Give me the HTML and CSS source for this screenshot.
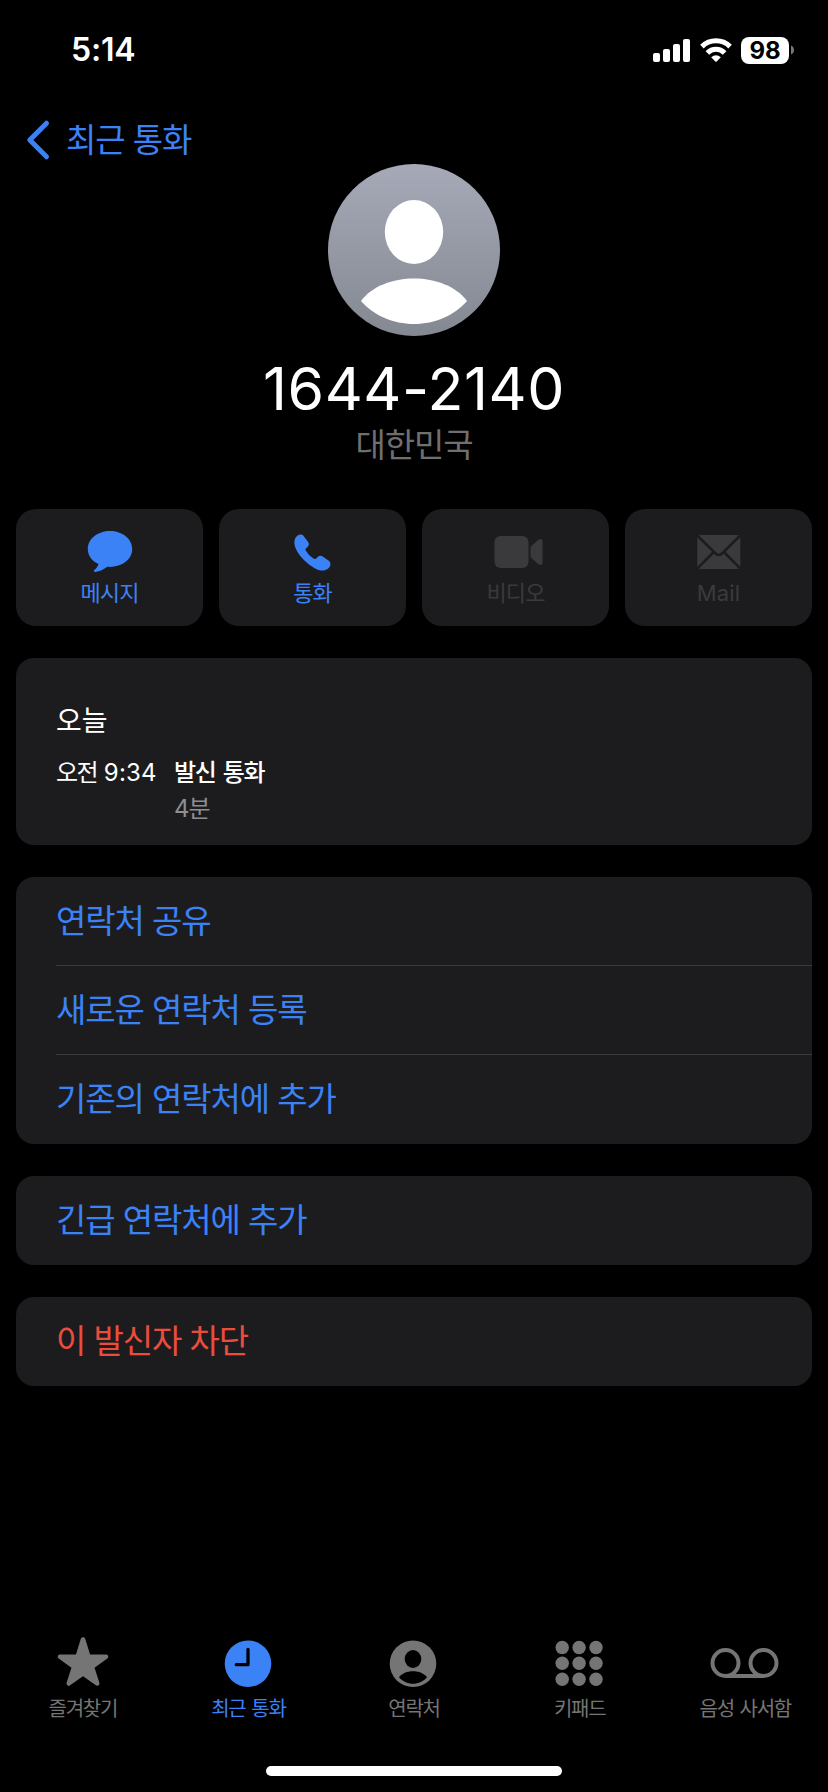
FILE: index.html
```html
<!DOCTYPE html>
<html lang="ko">
<head>
<meta charset="utf-8">
<title>최근 통화</title>
<link rel="stylesheet" href="styles.css">
</head>
<body>
<div class="screen">
  <header class="status">
    <span class="time">5:14</span>
    <div class="indicators">
      <svg class="signal" width="37" height="23" viewBox="0 0 37 23" fill="#fff"><rect y="14" width="7" height="9" rx="2"/><rect x="10" y="10" width="7" height="13" rx="2"/><rect x="20" y="5" width="7" height="18" rx="2"/><rect x="30" width="7" height="23" rx="2"/></svg>
      <svg class="wifi" width="32" height="24" viewBox="0 0 32 24"><g fill="none" stroke="#fff" stroke-width="5"><path d="M1.9 8.6A20.2 20.2 0 0 1 30.1 8.6"/><path d="M7.4 15A12 12 0 0 1 24.6 15"/></g><path fill="#fff" d="M11.2 19.2Q16 15.2 20.8 19.2L16.7 23.4Q16 24 15.3 23.4Z"/></svg>
      <div class="battery">98</div>
      <svg class="nub" width="4" height="10" viewBox="0 0 4 10"><path d="M0 0.500Q3 1.800 3 5T0 9.500Z" fill="#777"/></svg>
    </div>
  </header>
  <nav class="nav">
    <svg width="24" height="40" viewBox="0 0 24 40"><path d="M20.5 3.2L3.8 20l16.7 16.8" fill="none" stroke="#3b82f7" stroke-width="5" stroke-linecap="round" stroke-linejoin="round"/></svg>
    <a class="back">최근 통화</a>
  </nav>
  <section class="profile">
    <svg width="172" height="172" viewBox="0 0 172 172">
      <defs><linearGradient id="avatar" x1="0" y1="0" x2="0" y2="1"><stop offset="0" stop-color="#a6aab8"/><stop offset="1" stop-color="#848891"/></linearGradient></defs>
      <circle cx="86" cy="86" r="86" fill="url(#avatar)"/>
      <ellipse cx="86" cy="68" rx="29.2" ry="32" fill="#fff"/>
      <path fill="#fff" d="M33 137C44 122 65 114.5 86 114.5S128 122 139 137C127 151 107 160 86 160S45 151 33 137Z"/>
    </svg>
    <h1 class="number">1644-2140</h1>
    <p class="country">대한민국</p>
  </section>
  <section class="actions">
    <div class="action">
      <svg width="46" height="44" viewBox="0 0 46 44"><path fill="currentColor" d="M23 2C10.700 2 .8 9.900 .8 20C.8 26.700 5 32.200 11.500 35C10.800 37.700 9 39.600 7.200 41.300C6.300 42.300 7 43 8.300 43C12.500 42.700 17 40.200 20.300 37.800C34 38.800 45.200 31 45.200 20C45.200 9.900 35.300 2 23 2Z"/></svg>
      <span>메시지</span>
    </div>
    <div class="action">
      <svg width="46" height="44" viewBox="0 0 46 44"><path fill="currentColor" d="M6.500 7.600C8.500 5.300 11.800 4.800 13.600 7L18.100 13C19.400 14.900 19 16.500 17.500 18L15.900 19.600C15.300 20.300 15.400 21 15.900 21.800C17.900 25 20.500 27.700 24 29.700C24.800 30.200 25.500 30.100 26.100 29.500L28 27.800C29.300 26.500 30.900 26.300 32.700 27.400L38.800 31.700C41.100 33.500 40.900 36.500 39 38.700C35.400 42.500 30 42.200 24.700 39.200C17.700 35.400 9.900 28 6.300 20.800C3.900 15.900 3.500 11.100 6.500 7.600Z"/></svg>
      <span>통화</span>
    </div>
    <div class="action off">
      <svg width="50" height="44" viewBox="0 0 50 44" fill="currentColor"><rect x="3.500" y="7" width="34" height="32" rx="6"/><path d="M39.500 17.700L47.300 10.800Q51.500 8.500 51.500 13V33Q51.500 37.500 47.300 35.200L39.500 28.300Z"/></svg>
      <span>비디오</span>
    </div>
    <div class="action off">
      <svg width="46" height="44" viewBox="0 0 46 44"><rect x="1.300" y="6" width="43" height="34" rx="3" fill="currentColor"/><path d="M0 5.200L18.700 23.600Q22.800 28.500 26.900 23.600L45.600 5.200M0 40.800L17.200 23.500M45.600 40.800L28.400 23.500" fill="none" stroke="#1c1c1e" stroke-width="2.600"/></svg>
      <span class="latin">Mail</span>
    </div>
  </section>
  <section class="card log">
    <h2 class="day">오늘</h2>
    <div class="calls">
      <div class="when">오전 <span class="digits">9:34</span></div>
      <div class="what"><div class="kind">발신 통화</div><div class="length">4분</div></div>
    </div>
  </section>
  <section class="card list group">
    <a class="row">연락처 공유</a>
    <a class="row">새로운 연락처 등록</a>
    <a class="row">기존의 연락처에 추가</a>
  </section>
  <section class="card list"><a class="row">긴급 연락처에 추가</a></section>
  <section class="card list"><a class="row danger">이 발신자 차단</a></section>
  <footer class="tabs">
    <div class="tab">
      <svg width="54" height="54" viewBox="0 0 54 54"><path d="M27 4.500L32.300 21.700H50L35.800 31.800L41.200 48.500L27 38.300L12.800 48.500L18.200 31.800L4 21.700H21.700Z" fill="currentColor" stroke="currentColor" stroke-width="4.600" stroke-linejoin="round"/></svg>
      <span>즐겨찾기</span>
    </div>
    <div class="tab on">
      <svg width="54" height="54" viewBox="0 0 54 54"><circle cx="27" cy="28.700" r="23.300" fill="currentColor"/><path d="M27 14.500V29.700H15.300" fill="none" stroke="#000" stroke-width="3.300" stroke-linecap="round" stroke-linejoin="round"/></svg>
      <span>최근 통화</span>
    </div>
    <div class="tab">
      <svg width="54" height="54" viewBox="0 0 54 54"><circle cx="26" cy="28.700" r="23.300" fill="currentColor"/><ellipse cx="26" cy="24" rx="8.300" ry="9" fill="#000"/><path d="M12 42.200C15 38.300 20 36.200 26 36.200S37 38.300 40 42.200C36.500 46.200 31.500 48.700 26 48.700S15.500 46.200 12 42.200Z" fill="#000"/></svg>
      <span>연락처</span>
    </div>
    <div class="tab">
      <svg width="54" height="54" viewBox="0 0 54 54" fill="currentColor"><circle cx="9.200" cy="12.500" r="6.700"/><circle cx="26.100" cy="12.500" r="6.700"/><circle cx="43" cy="12.500" r="6.700"/><circle cx="9.200" cy="28.300" r="6.700"/><circle cx="26.100" cy="28.300" r="6.700"/><circle cx="43" cy="28.300" r="6.700"/><circle cx="9.200" cy="44.200" r="6.700"/><circle cx="26.100" cy="44.200" r="6.700"/><circle cx="43" cy="44.200" r="6.700"/></svg>
      <span>키패드</span>
    </div>
    <div class="tab">
      <svg width="70" height="54" viewBox="0 0 70 54" fill="none" stroke="currentColor" stroke-width="4"><circle cx="15.500" cy="28" r="13"/><circle cx="53.500" cy="28" r="13"/><path d="M15.500 41H53.500"/></svg>
      <span>음성 사서함</span>
    </div>
  </footer>
  <div class="home"></div>
</div>
</body>
</html>
```
FILE: styles.css
```css
* { box-sizing: border-box; margin: 0; padding: 0; }
body { background: #000; color: #fff; font-family: Inter, "Noto Sans CJK KR", sans-serif; }
svg { display: block; flex: none; overflow: visible; }
.screen { width: 828px; height: 1792px; display: flex; flex-direction: column; overflow: hidden; }

.status { height: 98px; padding: 2px 33px 0 71px; display: flex; justify-content: space-between; align-items: center; }
.time { font-size: 32px; font-weight: 600; line-height: 40px; letter-spacing: -0.2px; }
.indicators { display: flex; align-items: center; }
.wifi { margin-left: 10px; }
.battery { width: 48px; height: 27px; margin-left: 9px; border-radius: 8px; background: #fff; color: #000; font-size: 24px; font-weight: 700; line-height: 27px; text-align: center; }
.nub { margin-left: 2px; }

.nav { height: 66px; padding: 18px 0 0 26px; display: flex; align-items: center; gap: 16px; color: #3b82f7; }
.back, .country, .row { font-size: 33px; font-weight: 400; letter-spacing: -1.1px; word-spacing: 0; line-height: 48px; }

.profile { display: flex; flex-direction: column; align-items: center; }
.number { margin-top: 17px; font-size: 59px; font-weight: 400; line-height: 72px; letter-spacing: 0.5px; }
.country { margin-top: -4px; color: #6f6f6f; }

.actions { margin: 40px 16px 0; display: grid; grid-template-columns: repeat(4, 1fr); gap: 16px; }
.action { height: 117px; padding-top: 20px; border-radius: 20px; background: #1c1c1e; color: #3b82f7; display: flex; flex-direction: column; align-items: center; font-size: 22px; font-weight: 400; letter-spacing: -0.9px; line-height: 30px; gap: 5px; }
.off { color: #3a3a3d; }
.latin { letter-spacing: 0.2px; }

.card { margin: 32px 16px 0; border-radius: 18px; background: #1c1c1e; }
.log { height: 187px; padding: 45px 40px 0; }
.day { font-size: 28px; font-weight: 400; line-height: 36px; }
.calls { margin-top: 16px; display: flex; gap: 18px; font-size: 24px; letter-spacing: -1.7px; word-spacing: 2px; line-height: 36px; }
.when { font-weight: 400; width: 100px; white-space: nowrap; }
.digits { letter-spacing: 0.2px; }
.kind { font-weight: 500; letter-spacing: -1.4px; word-spacing: 2.5px; }
.length { color: #8e8e93; letter-spacing: -1px; }

.list { padding-left: 40px; }
.row { display: block; height: 89px; line-height: 88px; color: #3b82f7; }
.group .row:first-child { height: 88px; }
.row + .row { border-top: 1px solid #3b3b3e; }
.row + .row:last-child { height: 90px; }
.danger { color: #eb4d3d; }

.tabs { margin-top: auto; height: 131px; display: grid; grid-template-columns: repeat(5, 1fr); color: #757575; }
.tab { display: flex; flex-direction: column; align-items: center; gap: 7px; font-size: 20px; font-weight: 400; letter-spacing: -1.3px; word-spacing: 1.5px; line-height: 26px; }
.on { color: #3b82f7; }
.home { width: 296px; height: 10px; margin: 0 auto 16px; border-radius: 5px; background: #fff; flex: none; }
```
